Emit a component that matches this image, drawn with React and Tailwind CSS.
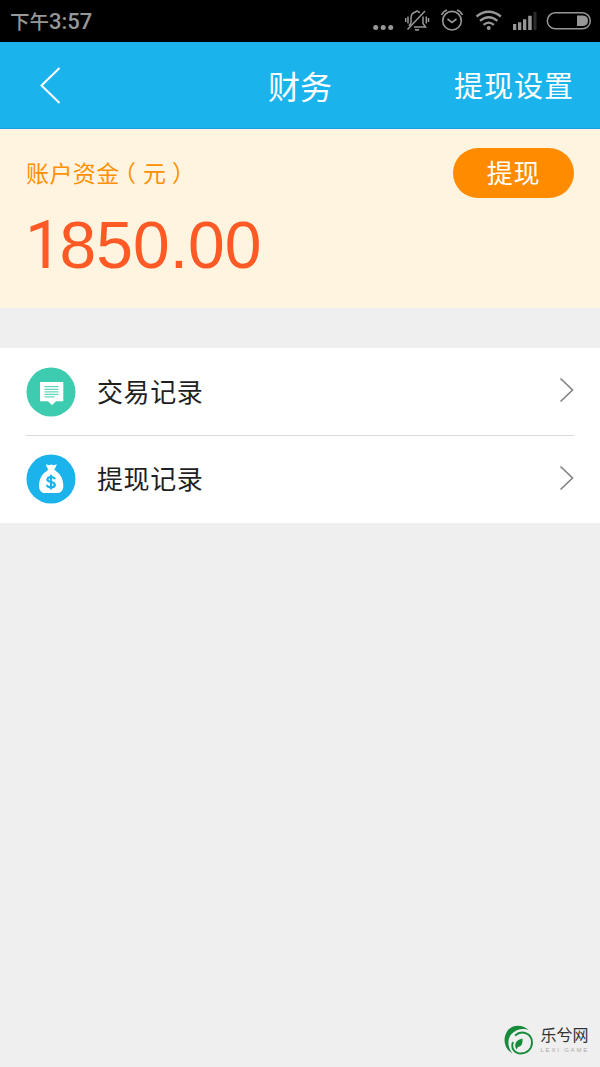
const records = [
  { label: "交易记录", icon: MessageIcon },
  { label: "提现记录", icon: MoneyBagIcon },
];

export default function App() {
  return (
    <div className="flex h-[1067px] w-[600px] flex-col overflow-hidden bg-[#efefef] font-['Liberation_Sans','Noto_Sans_CJK_SC',sans-serif]">
      <StatusBar />

      <header className="grid h-[87px] shrink-0 grid-cols-[1fr_auto_1fr] items-center border-b border-[#1c9ce4] bg-[#1ab3ec] pr-[26px] pl-[26px] text-white">
        <button type="button" aria-label="返回" className="ml-[13px] w-fit">
          <svg width="23" height="38" viewBox="0 0 23 38" fill="none" stroke="currentColor" strokeWidth="2">
            <path d="M20.500 2 2.500 19.500l18 17.500" />
          </svg>
        </button>
        <h1 className="pt-[6px] text-center text-[32px] leading-10 whitespace-nowrap">财务</h1>
        <button type="button" className="justify-self-end pt-[4px] text-[29px] leading-10 tracking-[1px] whitespace-nowrap">
          提现设置
        </button>
      </header>

      <section className="h-[179px] shrink-0 bg-[#fff4e0] px-[26px] pt-[19px]">
        <div className="flex items-center justify-between">
          <p className="pt-[2px] text-[23px] leading-[48px] tracking-[0.4px] whitespace-nowrap text-[#ff9000]">
            账户资金
            <span className="mr-[6.5px] ml-[5px] [font-feature-settings:'halt']">（</span>元
            <span className="ml-[5.5px] [font-feature-settings:'halt']">）</span>
          </p>
          <button
            type="button"
            className="h-[50px] w-[121px] shrink-0 rounded-full bg-[#ff8c00] pt-[2px] text-[26px] leading-[48px] tracking-[0.7px] text-white"
          >
            提现
          </button>
        </div>
        <p className="-ml-px mt-[9px] text-[66px] leading-[76px] text-[#ff5a25]">
          <span className="mr-[-2.5px] font-['Roboto',sans-serif]">1</span>850.00
        </p>
      </section>

      <ul className="mt-10 shrink-0 bg-white px-[26px]">
        {records.map(({ label, icon: Icon }) => (
          <li
            key={label}
            className="flex h-[88px] items-center border-b border-[#d9d9d9] last:h-[87px] last:border-b-0 last:pb-px"
          >
            <Icon />
            <span className="ml-[21px] flex-1 pt-[3px] text-[26px] tracking-[0.6px] text-[#1f1f1f]">{label}</span>
            <svg className="mb-[3px]" width="16" height="26" viewBox="0 0 16 26" fill="none" stroke="#858585" strokeWidth="1.700">
              <path d="m2.500 1.500 12 11.500-12 11.500" />
            </svg>
          </li>
        ))}
      </ul>

      <footer className="mt-auto flex items-center justify-end pr-[11px] pb-[12px]">
        <LeafLogo />
        <div className="ml-[6px] flex flex-col">
          <span className="text-[16px] leading-[20px] text-[#333]">乐兮网</span>
          <span className="text-[6px] leading-[8px] tracking-[1.8px] whitespace-nowrap text-[#aaa]">LEXI GAME</span>
        </div>
      </footer>
    </div>
  );
}

function StatusBar() {
  return (
    <div className="flex h-[42px] shrink-0 items-center bg-black pr-[8px] pl-[10px] text-[#979797]">
      <div className="flex flex-1 items-baseline pt-px font-['Roboto','Noto_Sans_CJK_SC',sans-serif] leading-[41px] font-medium">
        <span className="text-[19.5px]">下午</span>
        <span className="text-[22px]">3:57</span>
      </div>
      <svg width="22" height="42" viewBox="372 0 22 42" fill="currentColor">
        <circle cx="375.7" cy="27.4" r="2.5" />
        <circle cx="383.2" cy="27.4" r="2.5" />
        <circle cx="390.7" cy="27.4" r="2.5" />
      </svg>
      <svg className="ml-[10px]" width="26" height="42" viewBox="404 0 26 42" fill="none" stroke="currentColor" strokeWidth="1.5">
        <path d="M411 23V18q0-5 4.500-6 1.500-1.800 3 0l1.500.5M423 16.500v7l2.500 3.500h-11.500M411 23l-2 2.700M407.500 29.500 425 11M415 29.500q2 1 4 0" />
        <path d="M408 16.500v7M405.700 18v4M426.300 16.500v7M428.500 18v4" />
      </svg>
      <svg className="ml-[10px]" width="24" height="42" viewBox="440 0 24 42" fill="none" stroke="currentColor" strokeWidth="1.6">
        <circle cx="452" cy="20.700" r="9.3" />
        <path d="m447.500 19 4.500 3.500 4.500-3.500M441.500 15q1.500-3.500 5.500-5M462.500 15q-1.500-3.500-5.500-5" />
      </svg>
      <svg className="ml-[10px]" width="29" height="42" viewBox="474 0 29 42" fill="none" stroke="currentColor" strokeWidth="2.3">
        <path d="M476.500 16.500q12.200-9.500 24.400 0M480 20.800q8.700-7 17.400 0M483.500 24.800q5.200-4.400 10.400 0" />
        <circle cx="488.700" cy="28" r="2" fill="currentColor" stroke="none" />
      </svg>
      <svg className="ml-[9px]" width="26" height="42" viewBox="512 0 26 42" fill="currentColor">
        <path d="M513 24h3.300v6H513zM518 22.300h3.300V30H518zM523 19.300h3.300V30H523zM528.200 15.700h3.500V30h-3.500z" />
        <path d="M533.500 12h3v18h-3z" fill="#2b2b2b" />
      </svg>
      <svg className="ml-[8px]" width="46" height="42" viewBox="546 0 46 42" fill="none">
        <rect x="547.300" y="12.800" width="43" height="16" rx="8" stroke="currentColor" strokeWidth="1.500" />
        <path d="M577 15.500h6q5 .5 5 5.200t-5 5.300h-6z" fill="currentColor" />
      </svg>
    </div>
  );
}

function MessageIcon() {
  return (
    <svg width="50" height="50" viewBox="0 0 50 50">
      <circle cx="25" cy="25" r="24.500" fill="#3eccb1" />
      <path d="M14 15h23.300v19.300H30l-4 4-4-4h-8z" fill="#fff" />
      <path d="M18.500 19.700h14M18.500 22.300h14M18.500 24.900h14M18.500 27.300h14M18.500 29.900h10" stroke="#3eccb1" strokeWidth="1" />
    </svg>
  );
}

function MoneyBagIcon() {
  return (
    <svg width="50" height="50" viewBox="0 0 50 50">
      <circle cx="25" cy="25" r="24.500" fill="#1ab3ec" />
      <path
        d="m19.800 10.300 3.200 1 2.200-.8 2.200.8 3.400-1-.9 2.400-1.600 2.800 1.800 1.800c4.500 2.700 7.200 8.700 7.200 14.400 0 4.600-2.300 7.300-6 7.300H19c-3.700 0-6-2.700-6-7.300 0-5.700 2.700-11.700 7.500-14.400l1.700-1.800-1.500-2.800z"
        fill="#fff"
      />
      <path
        d="M28.800 25.200q-.5-2.200-3.800-2.200t-3.600 2.500q0 1.900 3.600 2.500t3.900 2.900q-.2 2.500-3.900 2.500t-4.100-2.500M25 20.800v14.700"
        fill="none"
        stroke="#1ab3ec"
        strokeWidth="2.200"
      />
    </svg>
  );
}

function LeafLogo() {
  return (
    <svg width="30" height="30" viewBox="0 0 30 30" fill="#188a3b">
      <path d="M25 5.500C20-.5 9-1 4 5-2 13 0 24 8.500 28.500 3.500 22 3 14 7.500 9 12 4.500 19.500 2.500 25 5.500z" />
      <path
        d="M11 10.500c7-6 17-2 17 7 0 6.500-5 11-11 11-6.500 0-10.500-5.500-8-11.500"
        fill="none"
        stroke="#188a3b"
        strokeWidth="1.900"
      />
      <path d="M18.500 13.500c.5 6-1.500 8-4.500 8.500l-1.500 2.500c-3-5.500-.5-9.500 6-11z" />
    </svg>
  );
}
